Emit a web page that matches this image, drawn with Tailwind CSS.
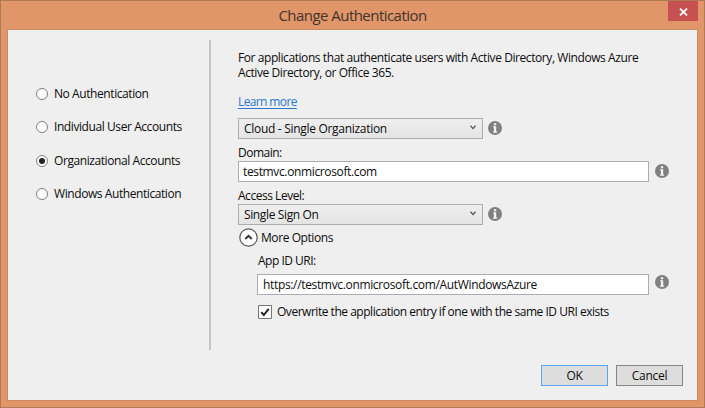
<!DOCTYPE html>
<html lang="en">
<head>
<meta charset="utf-8">
<title>Change Authentication</title>
<script src="https://cdn.jsdelivr.net/npm/@tailwindcss/browser@4"></script>
</head>
<body class="font-['Open_Sans','Noto_Sans',sans-serif] text-[12px] leading-[16px] text-[#0c0c0c] tracking-[-0.42px]">
<svg class="hidden">
  <symbol id="info" viewBox="0 0 14 14"><circle cx="7" cy="7" r="7" fill="#808080"/><path d="M5.9 2.2h2.3v2H5.9zM5 5.2h3.2v5.4h.9v1.1H5v-1.1h.9V6.300H5z" fill="#f4f4f4"/></symbol>
  <symbol id="chev" viewBox="0 0 6 5"><path d="M.5.8 3 3.6 5.5.8" fill="none" stroke="#555" stroke-width="1.3"/></symbol>
</svg>
<div class="flex h-[408px] w-[705px] flex-col border border-[#b07a54] bg-[#e09669]">
  <header class="relative flex h-[28px] shrink-0 justify-center">
    <h1 class="pt-[4px] text-[15px] leading-[21px] text-[#43332b] tracking-[-0.54px]">Change Authentication</h1>
    <button class="absolute right-[6px] top-0 flex h-[20px] w-[30px] items-center justify-center bg-[#c75050]" aria-label="Close">
      <svg class="mt-px h-[8px] w-[9px]" viewBox="0 0 9 8"><path d="M1 .6 8 7.4M8 .6 1 7.4" stroke="#fff" stroke-width="1.8"/></svg>
    </button>
  </header>
  <main class="mx-[6px] mb-[6px] flex grow flex-col border border-[#cc8a62] bg-[#efefef]">
    <div class="flex h-[335px]">
      <div class="flex w-[201px] flex-col gap-[17.3px] pl-[28px] pt-[56px]">
        <label class="flex h-[16px] items-center gap-[6px]"><span class="size-[12px] rounded-full border border-[#808080] bg-white"></span><span class="whitespace-nowrap">No Authentication</span></label>
        <label class="flex h-[16px] items-center gap-[6px]"><span class="size-[12px] rounded-full border border-[#808080] bg-white"></span><span class="whitespace-nowrap">Individual User Accounts</span></label>
        <label class="flex h-[16px] items-center gap-[6px]"><span class="flex size-[12px] items-center justify-center rounded-full border border-[#808080] bg-white"><span class="size-[6px] rounded-full bg-[#222]"></span></span><span class="whitespace-nowrap">Organizational Accounts</span></label>
        <label class="flex h-[16px] items-center gap-[6px]"><span class="size-[12px] rounded-full border border-[#808080] bg-white"></span><span class="whitespace-nowrap">Windows Authentication</span></label>
      </div>
      <div class="mt-[10px] h-[310px] w-[2px] bg-[#c6c6c6]"></div>
      <div class="flex flex-col pl-[27px] pt-[21px]">
        <p class="h-[29px] whitespace-nowrap leading-[14.5px]">For applications that authenticate users with Active Directory, Windows Azure<br>Active Directory, or Office 365.</p>
        <div class="mt-[14px] h-[16px]"><a class="text-[#2a78d0] underline underline-offset-[2px] tracking-[-0.62px]">Learn more</a></div>
        <div class="mt-[8px] flex h-[21px] items-start gap-[5px]">
          <div class="flex h-[21px] w-[245px] items-center justify-between border border-[#acacac] bg-linear-to-b from-[#efefef] to-[#e4e4e4] pl-[5px] pr-[6px]"><span class="tracking-[-0.3px]">Cloud - Single Organization</span><svg class="mb-[2px] h-[5px] w-[6px]"><use href="#chev"/></svg></div>
          <svg class="mt-[3px] size-[14px]"><use href="#info"/></svg>
        </div>
        <div class="mt-[6px] h-[16px] tracking-[-0.5px]">Domain:</div>
        <div class="flex h-[21px] gap-[6px]">
          <div class="flex h-[21px] w-[411px] items-center border border-[#abadb3] bg-white pl-[4px] tracking-[-0.36px]">testmvc.onmicrosoft.com</div>
          <svg class="mt-[3px] size-[14px]"><use href="#info"/></svg>
        </div>
        <div class="mt-[6px] h-[16px] tracking-[-0.47px]">Access Level:</div>
        <div class="flex h-[21px] items-start gap-[5px]">
          <div class="flex h-[21px] w-[245px] items-center justify-between border border-[#acacac] bg-linear-to-b from-[#efefef] to-[#e4e4e4] pl-[5px] pr-[6px]"><span class="tracking-[-0.37px]">Single Sign On</span><svg class="mb-[2px] h-[5px] w-[6px]"><use href="#chev"/></svg></div>
          <svg class="mt-[3px] size-[14px]"><use href="#info"/></svg>
        </div>
        <div class="mt-[3px] flex h-[19px] items-center gap-[3px] pl-px">
          <svg class="size-[19px]" viewBox="0 0 19 19"><circle cx="9.5" cy="9.5" r="8.7" fill="#fff" stroke="#555" stroke-width="1.2"/><path d="M6.3 11 9.5 7.8 12.7 11" fill="none" stroke="#333" stroke-width="1.9"/></svg>
          <span>More Options</span>
        </div>
        <div class="mt-[6px] h-[16px] pl-[20px] tracking-[-0.5px]">App ID URI:</div>
        <div class="mt-[5px] flex h-[21px] gap-[6px] pl-[19px]">
          <div class="flex h-[21px] w-[392px] items-center border border-[#abadb3] bg-white pl-[5px] tracking-[-0.34px]">https://testmvc.onmicrosoft.com/AutWindowsAzure</div>
          <svg class="mt-px size-[14px]"><use href="#info"/></svg>
        </div>
        <label class="mt-[9px] flex h-[16px] items-center gap-[5px] pl-[20px]">
          <svg class="size-[14px]" viewBox="0 0 14 14"><path d="M.5.5h13v13H.5z" fill="#fff" stroke="#777"/><path d="M3.3 7.2 5.8 10 10.7 3.800" fill="none" stroke="#222" stroke-width="2"/></svg>
          <span class="tracking-[-0.475px]">Overwrite the application entry if one with the same ID URI exists</span>
        </label>
      </div>
    </div>
    <footer class="flex justify-end gap-[8px] pr-[14px]">
      <button class="h-[21px] w-[67px] border border-[#5aa5f0] bg-[#ddd]">OK</button>
      <button class="h-[21px] w-[67px] border border-[#858585] bg-[#ddd] tracking-[-0.3px]">Cancel</button>
    </footer>
  </main>
</div>
</body>
</html>
